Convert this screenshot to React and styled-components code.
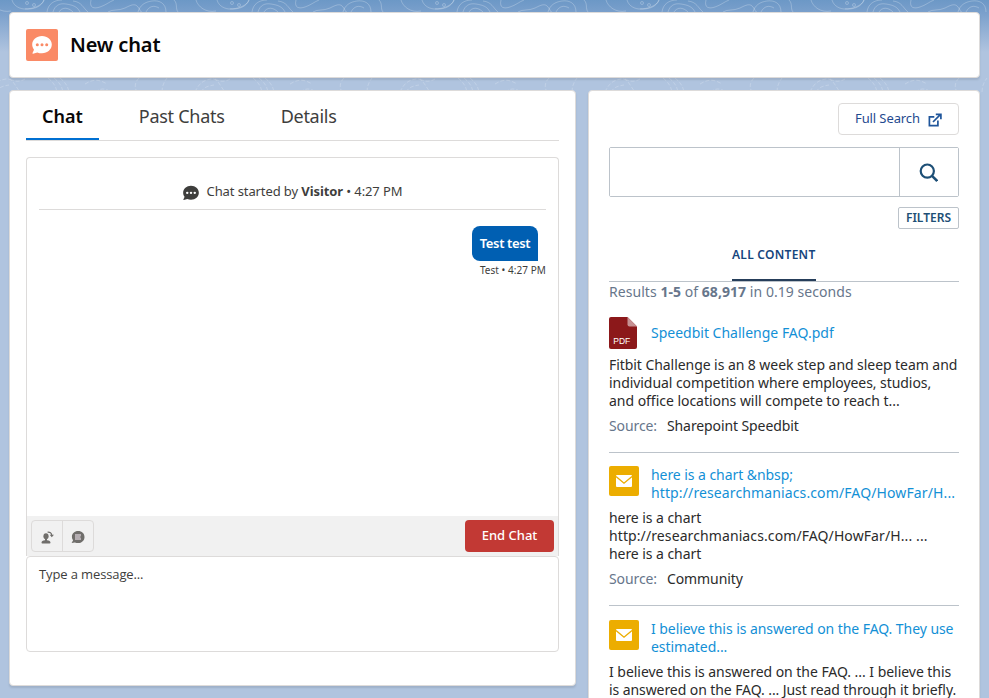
import React from "react";
import styled, { createGlobalStyle, css } from "styled-components";

const GlobalStyle = createGlobalStyle`
  * {
    box-sizing: border-box;
  }

  body {
    margin: 0;
    background: #b0c4df;
    font-family: "Noto Sans", "Open Sans", sans-serif;
    font-size: 13px;
    color: #3e3e3c;
  }

  button {
    font-family: inherit;
    background: #fff;
    cursor: pointer;
  }
`;

const Page = styled.div`
  position: relative;
  height: 698px;
  padding: 12px 9px 0;
  overflow: hidden;
`;

const Backdrop = styled.svg`
  position: absolute;
  top: 0;
  left: 0;
  z-index: -1;
`;

const Card = styled.section`
  background: #fff;
  border: 1px solid #dddbda;
  border-radius: 4px;
  box-shadow: 0 2px 2px rgba(0, 0, 0, 0.1);
`;

const Header = styled(Card)`
  display: flex;
  align-items: center;
  height: 66px;
  padding: 0 16px;
`;

const HeaderIcon = styled.span`
  display: flex;
  align-items: center;
  justify-content: center;
  width: 32px;
  height: 32px;
  margin-right: 12px;
  border-radius: 2px;
  background: #fa8a66;
`;

const Title = styled.h1`
  margin: 0;
  font-size: 20px;
  line-height: 24px;
  font-weight: 600;
  letter-spacing: -0.15px;
  color: #080707;
`;

const Columns = styled.div`
  display: grid;
  grid-template-columns: 567px 392px;
  gap: 12px;
  margin-top: 12px;
  align-items: start;
`;

const ChatPanel = styled(Card)`
  height: 596px;
  padding: 0 16px;
`;

const Tabs = styled.nav`
  display: flex;
  height: 50px;
  border-bottom: 1px solid #dddbda;
`;

const Tab = styled.a`
  height: 49px;
  margin-right: 24px;
  padding: 12px 16px 0;
  font-size: 18px;
  line-height: 26px;
  letter-spacing: -0.27px;
  white-space: nowrap;

  ${({ $active }) =>
    $active &&
    css`
      font-weight: 600;
      letter-spacing: 0;
      color: #080707;
      border-bottom: 2px solid #0070d2;
    `}
`;

const Conversation = styled.div`
  display: flex;
  flex-direction: column;
  height: 399px;
  margin-top: 16px;
  border: 1px solid #dddbda;
  border-bottom: 0;
  border-radius: 4px 4px 0 0;
`;

const Log = styled.div`
  flex: 1;
  padding: 0 12px;
`;

const StartEvent = styled.div`
  display: flex;
  align-items: center;
  justify-content: center;
  height: 52px;
  padding-top: 14px;
  border-bottom: 1px solid #dddbda;
  letter-spacing: -0.1px;
  white-space: pre;

  svg {
    margin: 4px 8px 0 0;
  }
`;

const Outgoing = styled.div`
  display: flex;
  flex-direction: column;
  align-items: flex-end;
  margin-top: 16px;
`;

const Bubble = styled.div`
  width: 66px;
  height: 35px;
  margin-right: 8px;
  border-radius: 8px 8px 0 8px;
  background: #005fb2;
  color: #fff;
  font-weight: 600;
  line-height: 35px;
  text-align: center;
  letter-spacing: -0.35px;
  white-space: nowrap;
`;

const Stamp = styled.div`
  margin-top: 2px;
  font-size: 10px;
  line-height: 15px;
  letter-spacing: 0.05px;
`;

const Toolbar = styled.div`
  display: flex;
  align-items: center;
  justify-content: space-between;
  height: 40px;
  padding: 0 4px;
  background: #f1f1f1;
`;

const ButtonGroup = styled.div`
  display: flex;
  border: 1px solid #dddbda;
  border-radius: 4px;
`;

const IconButton = styled.button`
  display: flex;
  align-items: center;
  justify-content: center;
  width: ${({ $width }) => $width};
  height: 30px;
  padding: 2px 0 0;
  border: 0;
  background: transparent;

  & + & {
    border-left: 1px solid #dddbda;
  }
`;

const EndButton = styled.button`
  width: 89px;
  height: 32px;
  padding: 0 0 2px;
  border: 0;
  border-radius: 4px;
  background: #c23934;
  color: #fff;
  font-size: 13px;
  font-weight: 500;
`;

const Composer = styled.div`
  height: 96px;
  padding: 8px 12px;
  border: 1px solid #dddbda;
  border-radius: 4px;
  font-family: "Open Sans", sans-serif;
  line-height: 18px;
  letter-spacing: -0.12px;
`;

const SearchPanel = styled(Card)`
  height: 640px;
  padding: 12px 20px 0;
`;

const FullSearch = styled.button`
  display: flex;
  align-items: center;
  justify-content: space-between;
  width: 121px;
  height: 32px;
  margin-left: auto;
  padding: 0 16px 2px;
  border: 1px solid #dddbda;
  border-radius: 4px;
  color: #1f4a8f;
  font-size: 13px;
  letter-spacing: -0.1px;
  white-space: nowrap;

  svg {
    margin-top: 4px;
  }
`;

const SearchBox = styled.div`
  display: flex;
  height: 50px;
  margin-top: 12px;
  border: 1px solid #bcc3ca;
  border-radius: 2px;
`;

const SearchInput = styled.input`
  flex: 1;
  min-width: 0;
  border: 0;
  outline: 0;
`;

const SearchButton = styled.button`
  display: flex;
  align-items: center;
  justify-content: center;
  width: 59px;
  padding: 0 1px 0 0;
  border: 0;
  border-left: 1px solid #bcc3ca;
`;

const Filters = styled.button`
  display: block;
  width: 61px;
  height: 22px;
  margin: 10px 0 0 auto;
  padding: 0;
  border: 1px solid #bcc3ca;
  border-radius: 2px;
  color: #1d4f76;
  font-size: 12px;
  font-weight: 600;
  line-height: 20px;
`;

const ContentTabs = styled.div`
  display: flex;
  justify-content: center;
  height: 53px;
  border-bottom: 1px solid #bcc3ca;
`;

const ContentTab = styled.a`
  width: 84px;
  height: 52px;
  margin-right: 20px;
  padding-top: 17px;
  border-bottom: 2px solid #263e5a;
  color: #16457d;
  font-size: 12px;
  font-weight: 600;
  line-height: 18px;
  letter-spacing: 0.27px;
  white-space: nowrap;
`;

const Summary = styled.div`
  font-size: 14px;
  line-height: 20px;
  letter-spacing: 0.05px;
  color: #67768b;
`;

const Result = styled.article`
  height: ${({ $height }) => $height};
  padding-top: ${({ $top }) => $top};
  border-bottom: 1px solid #bcc3ca;
  font-size: 14px;
  line-height: 18px;
  color: #2b2b2b;
`;

const ResultHead = styled.div`
  display: flex;
  gap: ${({ $gap }) => $gap || "12px"};
  align-items: ${({ $align }) => $align || "flex-start"};

  svg {
    flex: none;
  }
`;

const ResultLink = styled.a`
  color: #1390d6;
  white-space: nowrap;
`;

const Excerpt = styled.div`
  margin-top: 7px;
  white-space: nowrap;
`;

const Source = styled.div`
  display: flex;
  gap: 10px;
  margin-top: 7px;
  letter-spacing: -0.1px;

  span {
    color: #67768b;
  }
`;

const Line = styled.div`
  letter-spacing: ${({ $spacing }) => $spacing || "-0.06px"};
`;

const ChatIcon = ({ size, color, dots }) => (
  <svg width={size} height={size} viewBox="0 0 20 20">
    <path
      d="M10 1C4.5 1 .2 4.7.2 9.6c0 2 .7 3.7 1.8 5.2L.5 18c-.2.5.1.8.6.7l4.2-1.3c1.4.6 3 .9 4.7.9 5.500 0 9.800-3.900 9.800-8.700S15.500 1 10 1z"
      fill={color}
    />
    <circle cx="5.3" cy="9.8" r="1.5" fill={dots} />
    <circle cx="10" cy="9.8" r="1.5" fill={dots} />
    <circle cx="14.7" cy="9.8" r="1.5" fill={dots} />
  </svg>
);

const TransferIcon = () => (
  <svg width="13" height="13" viewBox="0 0 13 13" fill="#706e6b">
    <ellipse cx="5" cy="5.3" rx="2.6" ry="3" />
    <path d="M4 7h2v2.200c2.200.3 3.500 1.100 3.500 2.300 0 .6-.3.900-.8.900H1.300c-.5 0-.8-.3-.8-.9C.5 10.300 1.800 9.500 4 9.200z" />
    <path d="M6.600 1.100c2.300-.2 4 .9 4.100 3" fill="none" stroke="#706e6b" strokeWidth="1.2" />
    <path d="M8.700 3.800H13L10.800 6.300z" />
  </svg>
);

const QuickTextIcon = () => (
  <svg width="14" height="14" viewBox="0 0 14 14">
    <path
      d="M7.200 1C3.500 1 .9 3.500.9 6.800c0 1.400.4 2.500 1.200 3.500L.6 13l3.300-.6c1 .4 2.100.6 3.300.6 3.600 0 6.300-2.700 6.300-6.100S10.800 1 7.200 1z"
      fill="#706e6b"
    />
    <path d="M4 4h6v2l-1 1 1 1v2H4z" fill="#b5aeb2" />
  </svg>
);

const ExternalIcon = () => (
  <svg width="14" height="14" viewBox="0 0 14 14" fill="none" stroke="#1f559b" strokeWidth="1.7">
    <path d="M6.300 3.900H1.400v8.700h8.500V7.600" />
    <path d="M5 9l7.300-7.300M7.800 1.300h5.100v5" />
  </svg>
);

const SearchIcon = () => (
  <svg width="19" height="19" viewBox="0 0 19 19" fill="none" stroke="#1d4f76" strokeWidth="2.2">
    <circle cx="8.3" cy="8.1" r="6.600" />
    <path d="M12.800 12.700l5.400 5.300" strokeWidth="2.500" />
  </svg>
);

const PdfIcon = () => (
  <svg width="28" height="32" viewBox="0 0 28 32">
    <path d="M2 0h16.500L28 9.500V30a2 2 0 0 1-2 2H2a2 2 0 0 1-2-2V2a2 2 0 0 1 2-2z" fill="#8c181a" />
    <path d="M18.500 0L28 9.500h-7.500a2 2 0 0 1-2-2z" fill="#c69193" />
    <text x="4.3" y="27" fontSize="8.500" textLength="17" fill="#fff" fontFamily="Liberation Sans, sans-serif">
      PDF
    </text>
  </svg>
);

const MailIcon = () => (
  <svg width="30" height="30" viewBox="0 0 30 30">
    <rect width="30" height="30" rx="2" fill="#ecad00" />
    <rect x="7" y="9" width="16" height="12" rx="1" fill="#fff" />
    <path d="M7 10.500l8 6.700 8-6.700" fill="none" stroke="#ecad00" strokeWidth="1.4" />
  </svg>
);

const results = [
  {
    type: "pdf",
    top: "15px",
    height: "151px",
    title: [["Speedbit Challenge FAQ.pdf", "0px"]],
    excerpt: [
      ["Fitbit Challenge is an 8 week step and sleep team and"],
      ["individual competition where employees, studios,"],
      ["and office locations will compete to reach t...", "-0.03px"],
    ],
    source: "Sharepoint Speedbit",
  },
  {
    type: "mail",
    top: "13px",
    height: "153px",
    title: [["here is a chart &nbsp;"], ["http://researchmaniacs.com/FAQ/HowFar/H...", "0.12px"]],
    excerpt: [
      ["here is a chart"],
      ["http://researchmaniacs.com/FAQ/HowFar/H... ...", "0.1px"],
      ["here is a chart"],
    ],
    source: "Community",
  },
  {
    type: "mail",
    top: "14px",
    height: "154px",
    title: [["I believe this is answered on the FAQ. They use"], ["estimated..."]],
    excerpt: [
      ["I believe this is answered on the FAQ. ... I believe this", "-0.04px"],
      ["is answered on the FAQ. ... Just read through it briefly.", "-0.08px"],
    ],
    source: "Community",
  },
];

const Lines = ({ items }) =>
  items.map(([text, spacing], i) => (
    <Line key={i} $spacing={spacing}>
      {text}
    </Line>
  ));

const Contours = () => (
  <Backdrop width="989" height="698">
    <defs>
      <linearGradient id="sky" x1="0" y1="0" x2="0" y2="1">
        <stop offset="0" stopColor="#6c98c6" />
        <stop offset="0.25" stopColor="#7ba0cc" />
        <stop offset="1" stopColor="#b0c4df" />
      </linearGradient>
      <pattern id="contour" width="205" height="100" x="25" patternUnits="userSpaceOnUse">
        <g fill="none" stroke="#fff" strokeOpacity="0.24">
          <path d="M-13 0c2 7 9 9 16 9s14-3 16-9M192 0c2 7 9 9 13 9M0 9c7 0 17-3 19-9" />
          <circle cx="2" cy="3" r="1.500" />
          <circle cx="9" cy="5" r="1.500" />
          <path d="M22 12c1-8 7-12 15-12M28 12c2-7 7-9 13-8s11 2 14 8M34 12c3-5 9-5 14 0M48 1c9 1 10 7 15 11M66 0c-2 8 3 9 9 7s9-5 14-7M83 12c4-3 11-1 17-4s10-5 13-1 2 5 4 5M113 12c2-7 7-10 14-11s14 2 14 11M121 12c3-6 8-7 13-4M149 0c4 4 1 8 4 12M171 0c2 7 10 13 20 11" />
        </g>
        <g fill="none" stroke="#fff" strokeOpacity="0.2" strokeDasharray="4 2">
          <path d="M23 78c5 4 8 8 9 14M29 78c5 4 8 8 9 14M35 78c5 4 8 8 9 14M60 84c8-5 14-5 22 0M70 92c6-4 10-4 16 0M114 78c-4 4-5 9-2 14M137 92c0-6 2-10 5-14M170 92c4-9 9-12 16-13s9 7 14 13M176 92c3-5 7-6 13-7M190 79c5 3 10 3 15 0" />
        </g>
      </pattern>
    </defs>
    <rect width="989" height="52" fill="url(#sky)" />
    <rect width="989" height="94" fill="url(#contour)" />
  </Backdrop>
);

const App = () => (
  <Page>
    <GlobalStyle />
    <Contours />
    <Header>
      <HeaderIcon>
        <ChatIcon size={20} color="#fff" dots="#fa8a66" />
      </HeaderIcon>
      <Title>New chat</Title>
    </Header>
    <Columns>
      <ChatPanel>
        <Tabs>
          <Tab $active>Chat</Tab>
          <Tab>Past Chats</Tab>
          <Tab>Details</Tab>
        </Tabs>
        <Conversation>
          <Log>
            <StartEvent>
              <ChatIcon size={16} color="#3e3e3c" dots="#fff" />
              Chat started by <b>Visitor</b> • 4:27 PM
            </StartEvent>
            <Outgoing>
              <Bubble>Test test</Bubble>
              <Stamp>Test • 4:27 PM</Stamp>
            </Outgoing>
          </Log>
          <Toolbar>
            <ButtonGroup>
              <IconButton $width="30px">
                <TransferIcon />
              </IconButton>
              <IconButton $width="31px">
                <QuickTextIcon />
              </IconButton>
            </ButtonGroup>
            <EndButton>End Chat</EndButton>
          </Toolbar>
        </Conversation>
        <Composer>Type a message...</Composer>
      </ChatPanel>
      <SearchPanel>
        <FullSearch>
          Full Search
          <ExternalIcon />
        </FullSearch>
        <SearchBox>
          <SearchInput />
          <SearchButton>
            <SearchIcon />
          </SearchButton>
        </SearchBox>
        <Filters>FILTERS</Filters>
        <ContentTabs>
          <ContentTab>ALL CONTENT</ContentTab>
        </ContentTabs>
        <Summary>
          Results <b>1-5</b> of <b>68,917</b> in 0.19 seconds
        </Summary>
        {results.map(({ type, top, height, title, excerpt, source }, i) => (
          <Result key={i} $top={top} $height={height}>
            <ResultHead $gap={type === "pdf" ? "14px" : "12px"} $align={type === "pdf" && "center"}>
              {type === "pdf" ? <PdfIcon /> : <MailIcon />}
              <ResultLink>
                <Lines items={title} />
              </ResultLink>
            </ResultHead>
            <Excerpt>
              <Lines items={excerpt} />
            </Excerpt>
            <Source>
              <span>Source:</span>
              {source}
            </Source>
          </Result>
        ))}
      </SearchPanel>
    </Columns>
  </Page>
);

export default App;
